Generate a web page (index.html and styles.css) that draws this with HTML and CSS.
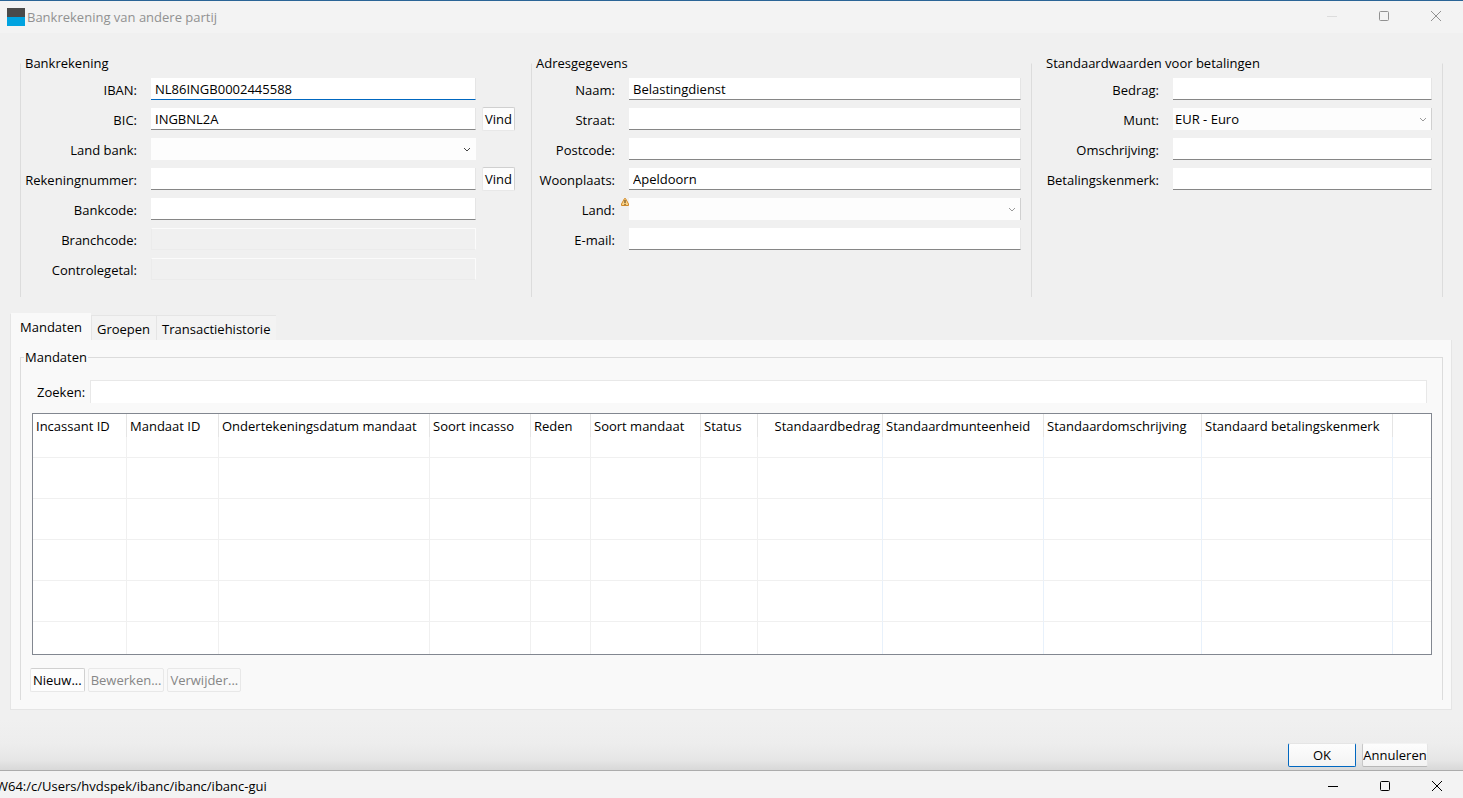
FILE: index.html
```html
<!DOCTYPE html>
<html lang="nl">
<head>
    <meta charset="utf-8">
    <title>Bankrekening van andere partij</title>
    <link rel="stylesheet" href="styles.css">
</head>
<body>
    <div class="dialog">
        <header class="titlebar">
            <span class="app-icon"></span>
            <span class="title">Bankrekening van andere partij</span>
            <div class="window-buttons">
                <button type="button" class="faded" aria-label="Minimaliseren"><svg width="10" height="10"><path d="M0 5.5H10"/></svg></button>
                <button type="button" aria-label="Maximaliseren"><svg width="10" height="10"><rect x=".5" y=".5" width="9" height="9" rx="1"/></svg></button>
                <button type="button" aria-label="Sluiten"><svg width="10" height="10"><path d="M0 0L10 10M10 0L0 10"/></svg></button>
            </div>
        </header>

        <form class="content">
            <div class="groups">
                <fieldset class="group account">
                    <legend>Bankrekening</legend>
                    <div class="fields">
                        <label for="iban">IBAN:</label>
                        <input type="text" id="iban" class="active" value="NL86INGB0002445588">
                        <label for="bic">BIC:</label>
                        <input type="text" id="bic" value="INGBNL2A">
                        <button type="button" class="button">Vind</button>
                        <label for="landbank">Land bank:</label>
                        <div class="select">
                            <select id="landbank"><option></option></select>
                            <svg width="8" height="6"><path d="M1 1L4 4L7 1"/></svg>
                        </div>
                        <label for="rekening">Rekeningnummer:</label>
                        <input type="text" id="rekening">
                        <button type="button" class="button">Vind</button>
                        <label for="bankcode">Bankcode:</label>
                        <input type="text" id="bankcode">
                        <label for="branchcode">Branchcode:</label>
                        <input type="text" id="branchcode" disabled>
                        <label for="controle">Controlegetal:</label>
                        <input type="text" id="controle" disabled>
                    </div>
                </fieldset>

                <fieldset class="group address">
                    <legend>Adresgegevens</legend>
                    <div class="fields">
                        <label for="naam">Naam:</label>
                        <input type="text" id="naam" value="Belastingdienst">
                        <label for="straat">Straat:</label>
                        <input type="text" id="straat">
                        <label for="postcode">Postcode:</label>
                        <input type="text" id="postcode">
                        <label for="woonplaats">Woonplaats:</label>
                        <input type="text" id="woonplaats" value="Apeldoorn">
                        <label for="land">Land:</label>
                        <div class="select light">
                            <select id="land"><option></option></select>
                            <svg width="8" height="6"><path d="M1 1L4 4L7 1"/></svg>
                            <svg class="warning" width="8" height="10" viewBox="0 0 8 10">
                                <path class="sign" d="M3.5 1.5H4.5L7.5 7V8.5H.5V7Z"/>
                                <path class="mark" d="M4 3V6M4 6.8V8"/>
                            </svg>
                        </div>
                        <label for="email">E-mail:</label>
                        <input type="text" id="email">
                    </div>
                </fieldset>

                <fieldset class="group payment">
                    <legend>Standaardwaarden voor betalingen</legend>
                    <div class="fields">
                        <label for="bedrag">Bedrag:</label>
                        <input type="text" id="bedrag">
                        <label for="munt">Munt:</label>
                        <div class="select light">
                            <select id="munt"><option>EUR - Euro</option></select>
                            <svg width="8" height="6"><path d="M1 1L4 4L7 1"/></svg>
                        </div>
                        <label for="omschrijving">Omschrijving:</label>
                        <input type="text" id="omschrijving">
                        <label for="kenmerk">Betalingskenmerk:</label>
                        <input type="text" id="kenmerk">
                    </div>
                </fieldset>
            </div>

            <div class="tabs">
                <button type="button" class="tab selected">Mandaten</button>
                <button type="button" class="tab">Groepen</button>
                <button type="button" class="tab">Transactiehistorie</button>
            </div>
            <div class="tab-panel">
                <fieldset class="mandates">
                    <legend>Mandaten</legend>
                    <div class="mandates-body">
                        <div class="search">
                            <label for="zoeken">Zoeken:</label>
                            <input type="text" id="zoeken">
                        </div>
                        <table class="grid">
                            <thead>
                                <tr>
                                    <th>Incassant ID</th>
                                    <th>Mandaat ID</th>
                                    <th>Ondertekeningsdatum mandaat</th>
                                    <th>Soort incasso</th>
                                    <th>Reden</th>
                                    <th>Soort mandaat</th>
                                    <th>Status</th>
                                    <th class="number">Standaardbedrag</th>
                                    <th>Standaardmunteenheid</th>
                                    <th>Standaardomschrijving</th>
                                    <th>Standaard betalingskenmerk</th>
                                    <th></th>
                                </tr>
                            </thead>
                            <tbody>
                                <tr><td></td><td></td><td></td><td></td><td></td><td></td><td></td><td></td><td></td><td></td><td></td><td></td></tr>
                                <tr><td></td><td></td><td></td><td></td><td></td><td></td><td></td><td></td><td></td><td></td><td></td><td></td></tr>
                                <tr><td></td><td></td><td></td><td></td><td></td><td></td><td></td><td></td><td></td><td></td><td></td><td></td></tr>
                                <tr><td></td><td></td><td></td><td></td><td></td><td></td><td></td><td></td><td></td><td></td><td></td><td></td></tr>
                                <tr><td></td><td></td><td></td><td></td><td></td><td></td><td></td><td></td><td></td><td></td><td></td><td></td></tr>
                                <tr><td></td><td></td><td></td><td></td><td></td><td></td><td></td><td></td><td></td><td></td><td></td><td></td></tr>
                            </tbody>
                        </table>
                        <div class="actions">
                            <button type="button" class="button">Nieuw...</button>
                            <button type="button" class="button" disabled>Bewerken...</button>
                            <button type="button" class="button" disabled>Verwijder...</button>
                        </div>
                    </div>
                </fieldset>
            </div>
        </form>

        <footer class="footer">
            <button type="button" class="button ok">OK</button>
            <button type="button" class="button cancel">Annuleren</button>
        </footer>
    </div>

    <!-- title bar of the terminal window below the dialog -->
    <div class="terminal">
        <span class="terminal-title">W64:/c/Users/hvdspek/ibanc/ibanc/ibanc-gui</span>
        <div class="window-buttons">
            <button type="button" aria-label="Minimaliseren"><svg width="10" height="10"><path d="M0 5.5H10"/></svg></button>
            <button type="button" aria-label="Maximaliseren"><svg width="10" height="10"><rect x=".5" y=".5" width="9" height="9" rx="1"/></svg></button>
            <button type="button" aria-label="Sluiten"><svg width="10" height="10"><path d="M0 0L10 10M10 0L0 10"/></svg></button>
        </div>
    </div>
</body>
</html>
```
FILE: styles.css
```css
* {
    box-sizing: border-box;
}
body {
    margin: 0;
    min-height: 100vh;
    display: flex;
    flex-direction: column;
    background-color: #f0f0f0;
    color: #000;
    overflow-x: hidden;
}
body, input, select, button {
    font-family: "Open Sans", "Noto Sans", sans-serif;
    font-size: 13px;
    line-height: 18px;
}
.dialog {
    flex: 1;
    display: flex;
    flex-direction: column;
    border-top: 1px solid #2a6496;
}
.titlebar {
    display: flex;
    align-items: center;
    height: 32px;
    padding-left: 7px;
    padding-right: 1px;
    background-color: #f3f3f3;
    color: #919191;
}
.app-icon {
    width: 18px;
    height: 18px;
    margin-right: 2px;
    background: linear-gradient(#4a4a4a 50%, #00a3e0 50%);
}
.window-buttons {
    display: flex;
    margin-left: auto;
}
.window-buttons button {
    display: flex;
    align-items: center;
    justify-content: center;
    width: 52px;
    height: 26px;
    padding: 0;
    border: none;
    background: none;
    color: inherit;
}
.titlebar .window-buttons {
    padding-bottom: 2px;
}
.window-buttons .faded {
    color: #dcdcdc;
}
svg {
    fill: none;
    stroke: currentColor;
}
.content {
    padding: 21px 11px 0 10px;
}
fieldset {
    margin: 0;
    padding: 0;
    min-width: 0;
    border: 1px solid #dcdcdc;
}
legend {
    margin-left: 3px;
    padding: 0 1px;
}
.groups {
    display: grid;
    grid-template-columns: 511fr 500fr 412fr;
    margin: 0 9px 0 10px;
}
.group {
    min-height: 243px;
    border-width: 1px 0 0 1px;
    border-top-color: transparent;
}
.fields {
    display: grid;
    grid-auto-rows: 22px;
    gap: 8px 6px;
    padding-top: 6px;
}
.fields label {
    grid-column: 1;
    padding-right: 8px;
    line-height: 24px;
    text-align: right;
}
.account .fields {
    grid-template-columns: 124px 1fr 33px;
    padding-right: 16px;
}
.address .fields {
    grid-template-columns: 91px 1fr;
    padding-right: 10px;
}
.payment {
    border-right-width: 1px;
}
.payment legend {
    margin-left: 13px;
}
.payment .fields {
    grid-template-columns: 135px 1fr;
    padding-right: 10px;
}
input, select {
    width: 100%;
    height: 22px;
    min-width: 0;
    margin: 0;
    padding: 0 4px;
    border: none;
    border-right: 1px solid #e5e5e5;
    border-bottom: 1px solid #868686;
    border-radius: 0;
    background-color: #fff;
    color: #000;
    outline: none;
}
.active {
    border-bottom-color: #0067c0;
}
input:disabled {
    border: 1px solid #ebebeb;
    border-top-color: #fbfbfb;
    border-right-color: #fbfbfb;
    background-color: #f0f0f0;
}
.select {
    position: relative;
}
select {
    padding: 0 2px;
    appearance: none;
    border-width: 0 0 0 1px;
    border-color: #d0d0d0;
    background-color: #fdfdfd;
}
.select svg {
    position: absolute;
    top: 9px;
    right: 5px;
    color: #444;
}
.light svg {
    color: #999;
}
.light select {
    border-width: 0 1px;
}
.payment select {
    border-left-width: 0;
}
.select .warning {
    top: -1px;
    right: auto;
    left: -8px;
}
.warning .sign {
    fill: #fbd58a;
    stroke: #d08a2c;
}
.warning .mark {
    stroke: #4a2c00;
}
.button {
    height: 24px;
    padding: 0;
    border: 1px solid #d0d0d0;
    border-bottom-color: #e8e8e8;
    border-left-color: #e8e8e8;
    border-radius: 2px;
    background-color: #fdfdfd;
    color: #000;
    white-space: nowrap;
}
.button:disabled {
    border-color: #e8e8e8;
    background-color: #f9f9f9;
    color: #868686;
}
.fields .button {
    grid-column: 3;
    align-self: center;
}
.tabs {
    display: flex;
    align-items: flex-end;
    height: 27px;
    margin-top: 16px;
}
.tab {
    height: 25px;
    padding: 2px 6px 0 5px;
    border: 1px solid #e5e5e5;
    border-width: 1px 0 0 1px;
    background-color: #f3f3f3;
    color: #000;
}
.tab.selected {
    height: 27px;
    padding: 0 9px;
    border-top-color: #f9f9f9;
    background-color: #f9f9f9;
}
.tab-panel {
    padding: 8px 8px 9px 9px;
    border: 1px solid #e5e5e5;
    border-top: none;
    background-color: #f9f9f9;
}
.mandates {
    border-bottom: none;
}
.mandates-body {
    padding: 14px 10px 8px 9px;
}
.search {
    display: flex;
    align-items: center;
    gap: 5px;
    padding: 0 5px 0 7px;
}
.search input {
    flex: 1;
    height: 23px;
    border: 1px solid #e8e8e8;
    border-bottom: none;
}
.grid {
    width: calc(100% - 2px);
    margin: 10px 0 13px 2px;
    table-layout: fixed;
    border: 1px solid #828790;
    border-spacing: 0;
    background-color: #fff;
}
.grid th, .grid td {
    padding: 0;
    border-right: 1px solid #f0f0f0;
}
.grid th {
    height: 23px;
    padding: 0 2px 0 3px;
    border-right-color: #e5e5e5;
    font-weight: normal;
    text-align: left;
    white-space: nowrap;
}
.grid th.number {
    text-align: right;
}
.grid td {
    height: 41px;
    border-bottom: 1px solid #f0f0f0;
}
.grid td:nth-child(n+8) {
    border-right-color: #e8f1fb;
}
.grid tr:first-child td {
    height: 21px;
}
.grid tr:last-child td {
    height: 32px;
    border-bottom: none;
}
.grid tr :last-child {
    border-right: none;
}
.grid th:nth-child(1) { width: 94px; }
.grid th:nth-child(2) { width: 92px; }
.grid th:nth-child(3) { width: 211px; }
.grid th:nth-child(4) { width: 101px; }
.grid th:nth-child(5) { width: 60px; }
.grid th:nth-child(6) { width: 110px; }
.grid th:nth-child(7) { width: 57px; }
.grid th:nth-child(8) { width: 125px; }
.grid th:nth-child(9) { width: 161px; }
.grid th:nth-child(10) { width: 158px; }
.grid th:nth-child(11) { width: 191px; }
.actions {
    display: flex;
    gap: 3px;
}
.actions .button {
    padding: 0 2px;
}
.footer {
    display: flex;
    justify-content: flex-end;
    align-items: flex-end;
    gap: 6px;
    flex: 1;
    padding: 0 35px 3px 0;
    background: linear-gradient(to top, #d8d8d8, #e6e6e6 10px, #ededed 26px, #f0f0f0 50px);
}
.footer .button {
    background: linear-gradient(#fdfdfd, #f3f3f3);
}
.ok {
    width: 68px;
    border-color: #e5e5e5 #0067c0 #0067c0;
}
.cancel {
    width: 66px;
    border-color: #f3f3f3 #e5e5e5 #b8b8b8 #c8c8c8;
}
.terminal {
    display: flex;
    align-items: center;
    height: 28px;
    border-top: 1px solid #acacac;
    background-color: #f3f3f3;
    overflow: hidden;
}
.terminal-title {
    margin-left: -4px;
    padding-top: 2px;
}
.terminal .window-buttons {
    padding-top: 3px;
}
```
